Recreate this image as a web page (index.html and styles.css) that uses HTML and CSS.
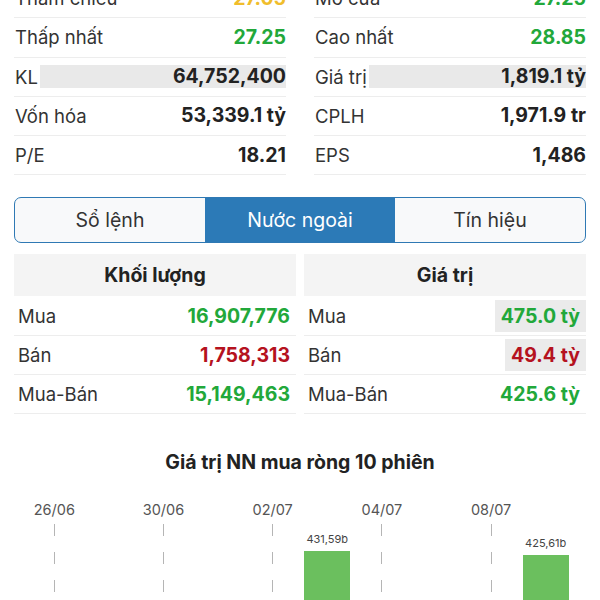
FILE: index.html
```html
<!DOCTYPE html>
<html lang="vi">

<head>
    <meta charset="UTF-8">
    <meta name="viewport" content="width=device-width, initial-scale=1.0">
    <title>Chi tiết cổ phiếu</title>
    <link rel="stylesheet" href="styles.css">
</head>

<body>
    <div class="stats">
        <div class="stats-col">
            <div class="stat-row"><span class="label">Tham chiếu</span><span class="value yellow">27.05</span></div>
            <div class="stat-row"><span class="label">Thấp nhất</span><span class="value green">27.25</span></div>
            <div class="stat-row"><span class="label">KL</span><span class="value flash">64,752,400</span></div>
            <div class="stat-row"><span class="label">Vốn hóa</span><span class="value">53,339.1 tỷ</span></div>
            <div class="stat-row"><span class="label">P/E</span><span class="value">18.21</span></div>
        </div>
        <div class="stats-col">
            <div class="stat-row"><span class="label">Mở cửa</span><span class="value green">27.25</span></div>
            <div class="stat-row"><span class="label">Cao nhất</span><span class="value green">28.85</span></div>
            <div class="stat-row"><span class="label">Giá trị</span><span class="value flash">1,819.1 tỷ</span></div>
            <div class="stat-row"><span class="label">CPLH</span><span class="value">1,971.9 tr</span></div>
            <div class="stat-row"><span class="label">EPS</span><span class="value">1,486</span></div>
        </div>
    </div>

    <div class="tabs">
        <div class="tab">Sổ lệnh</div>
        <div class="tab active">Nước ngoài</div>
        <div class="tab">Tín hiệu</div>
    </div>

    <div class="foreign">
        <div class="foreign-block">
            <div class="foreign-head">Khối lượng</div>
            <div class="foreign-row"><span>Mua</span><span class="fvalue green">16,907,776</span></div>
            <div class="foreign-row"><span>Bán</span><span class="fvalue red">1,758,313</span></div>
            <div class="foreign-row"><span>Mua-Bán</span><span class="fvalue green">15,149,463</span></div>
        </div>
        <div class="foreign-block">
            <div class="foreign-head">Giá trị</div>
            <div class="foreign-row"><span>Mua</span><span class="fvalue green flash">475.0 tỳ</span></div>
            <div class="foreign-row"><span>Bán</span><span class="fvalue red flash">49.4 tỳ</span></div>
            <div class="foreign-row"><span>Mua-Bán</span><span class="fvalue green">425.6 tỳ</span></div>
        </div>
    </div>

    <div class="chart">
        <div class="chart-title">Giá trị NN mua ròng 10 phiên</div>
        <div class="chart-cols">
            <div class="col"><div class="date">26/06</div><div class="plot tick"></div></div>
            <div class="col"><div class="date"></div><div class="plot"></div></div>
            <div class="col"><div class="date">30/06</div><div class="plot tick"></div></div>
            <div class="col"><div class="date"></div><div class="plot"></div></div>
            <div class="col"><div class="date">02/07</div><div class="plot tick"></div></div>
            <div class="col">
                <div class="date"></div>
                <div class="plot">
                    <div class="bar-label">431,59b</div>
                    <div class="bar" style="height: 288px"></div>
                </div>
            </div>
            <div class="col"><div class="date">04/07</div><div class="plot tick"></div></div>
            <div class="col"><div class="date"></div><div class="plot"></div></div>
            <div class="col"><div class="date">08/07</div><div class="plot tick"></div></div>
            <div class="col">
                <div class="date"></div>
                <div class="plot">
                    <div class="bar-label">425,61b</div>
                    <div class="bar" style="height: 284px"></div>
                </div>
            </div>
        </div>
    </div>
</body>

</html>
```

FILE: styles.css
```css
html {
    overflow: hidden;
}

body {
    font-family: Inter, "Noto Sans", sans-serif;
    margin: 0;
    color: #222;
    background-color: #fff;
}

.green {
    color: #22a83a;
}

.red {
    color: #b5121e;
}

.yellow {
    color: #f0bd2c;
}

/* top stats */
.stats {
    display: grid;
    grid-template-columns: 1fr 1fr;
    gap: 28px;
    padding: 0 14px;
    margin-top: -21px;
}

.stat-row {
    display: flex;
    align-items: center;
    height: 39.25px;
    box-sizing: border-box;
    border-bottom: 1px solid #ededed;
    font-size: 18.5px;
}

.label {
    color: #333;
    padding-left: 1px;
}

.value {
    flex: 1;
    text-align: right;
    font-weight: 700;
    font-size: 19.5px;
    line-height: 23px;
}

.stat-row .flash {
    margin-left: 2px;
    background-color: #e9e9e9;
}

/* tabs */
.tabs {
    display: grid;
    grid-template-columns: 1fr 1fr 1fr;
    margin: 22px 14px 0;
    height: 46px;
    border: 1.5px solid #2f79b4;
    border-radius: 7px;
    overflow: hidden;
    box-sizing: border-box;
    background-color: #f8f9fa;
}

.tab {
    display: flex;
    align-items: center;
    justify-content: center;
    font-size: 19.5px;
    color: #333;
}

.tab.active {
    background-color: #2c7ab7;
    color: #fff;
}

/* foreign trading */
.foreign {
    display: grid;
    grid-template-columns: 1fr 1fr;
    gap: 8px;
    margin: 11px 14px 0;
}

.foreign-head {
    height: 42px;
    margin-bottom: 1px;
    display: flex;
    align-items: center;
    justify-content: center;
    background-color: #f4f4f4;
    font-weight: 700;
    font-size: 19.5px;
}

.foreign-row {
    display: flex;
    align-items: center;
    justify-content: space-between;
    height: 39px;
    box-sizing: border-box;
    border-bottom: 1px solid #ededed;
    padding-left: 4px;
    font-size: 18.5px;
    color: #333;
}

.fvalue {
    font-weight: 700;
    font-size: 19.5px;
    padding: 0 6px;
    line-height: 32px;
}

.fvalue.flash {
    background-color: #ebebeb;
}

/* chart */
.chart {
    margin-top: 36px;
}

.chart-title {
    text-align: center;
    font-weight: 700;
    font-size: 19.5px;
    line-height: 24px;
}

.chart-cols {
    display: grid;
    grid-template-columns: repeat(10, 1fr);
    padding: 0 27px;
    margin-top: 27px;
}

.col {
    display: flex;
    flex-direction: column;
    align-items: center;
}

.date {
    height: 18px;
    line-height: 18px;
    font-size: 14.5px;
    color: #555;
}

.plot {
    width: 100%;
    height: 320px;
    display: flex;
    flex-direction: column;
    justify-content: flex-end;
    align-items: center;
}

.plot.tick {
    background: repeating-linear-gradient(to bottom, transparent 0, transparent 5px, #b5b5b5 5px, #b5b5b5 17px, transparent 17px, transparent 28px) no-repeat center top / 1px 100%;
}

.bar-label {
    font-size: 11px;
    line-height: 14px;
    color: #444;
    margin-bottom: 5px;
}

.bar {
    width: 46px;
    background-color: #6bbf5e;
}
```
